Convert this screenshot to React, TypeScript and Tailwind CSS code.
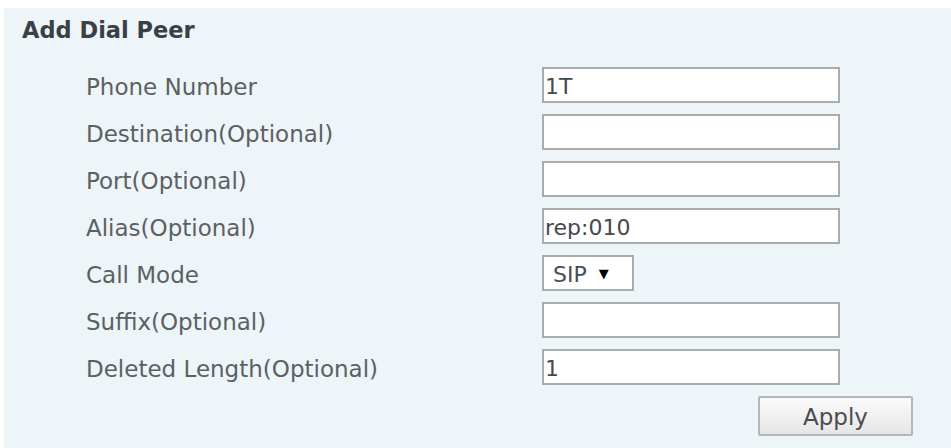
import React from "react";

const rows: { label: string; value?: string; select?: boolean }[] = [
  { label: "Phone Number", value: "1T" },
  { label: "Destination(Optional)", value: "" },
  { label: "Port(Optional)", value: "" },
  { label: "Alias(Optional)", value: "rep:010" },
  { label: "Call Mode", select: true },
  { label: "Suffix(Optional)", value: "" },
  { label: "Deleted Length(Optional)", value: "1" },
];

export default function App() {
  return (
    <div className="w-[951px] h-[448px] bg-white pt-[8px] pl-[4px] overflow-hidden" style={{ fontFamily: '"DejaVu Sans", Verdana, sans-serif' }}>
      <div className="h-[440px] bg-[#eef5f8] pt-[6px]">
        <div className="pl-[18px] text-[22.5px] leading-[32px] font-bold text-[#3a4046]">Add Dial Peer</div>
        <div className="mt-[21px] pl-[82px] grid grid-cols-[456px_298px] gap-y-[11px]">
          {rows.map((r) => (
            <React.Fragment key={r.label}>
              <div className="h-[36px] flex items-center pt-[4px] text-[23px] text-[#5c6064]">{r.label}</div>
              {r.select ? (
                <div className="h-[36px] w-[92px] border-2 border-[#a9adaf] bg-white flex items-center pl-[9px] pt-[2px] text-[22px] text-[#4a4d50]">
                  <span>SIP</span>
                  <span className="ml-[12px] text-[13px] text-black">▼</span>
                </div>
              ) : (
                <div className="h-[36px] border-2 border-[#a9adaf] bg-white flex items-center pl-[1px] pt-[2px] text-[22px] text-[#45484c]">
                  {r.value}
                </div>
              )}
            </React.Fragment>
          ))}
        </div>
        <div className="mt-[11px] pl-[754px]">
          <button className="w-[155px] h-[40px] border-2 border-[#b4b6b8] rounded-[2px] bg-gradient-to-b from-[#fbfbfb] to-[#e6e6e6] pt-[2px] text-[23px] text-[#4a4d50] flex items-center justify-center">
            Apply
          </button>
        </div>
      </div>
    </div>
  );
}
